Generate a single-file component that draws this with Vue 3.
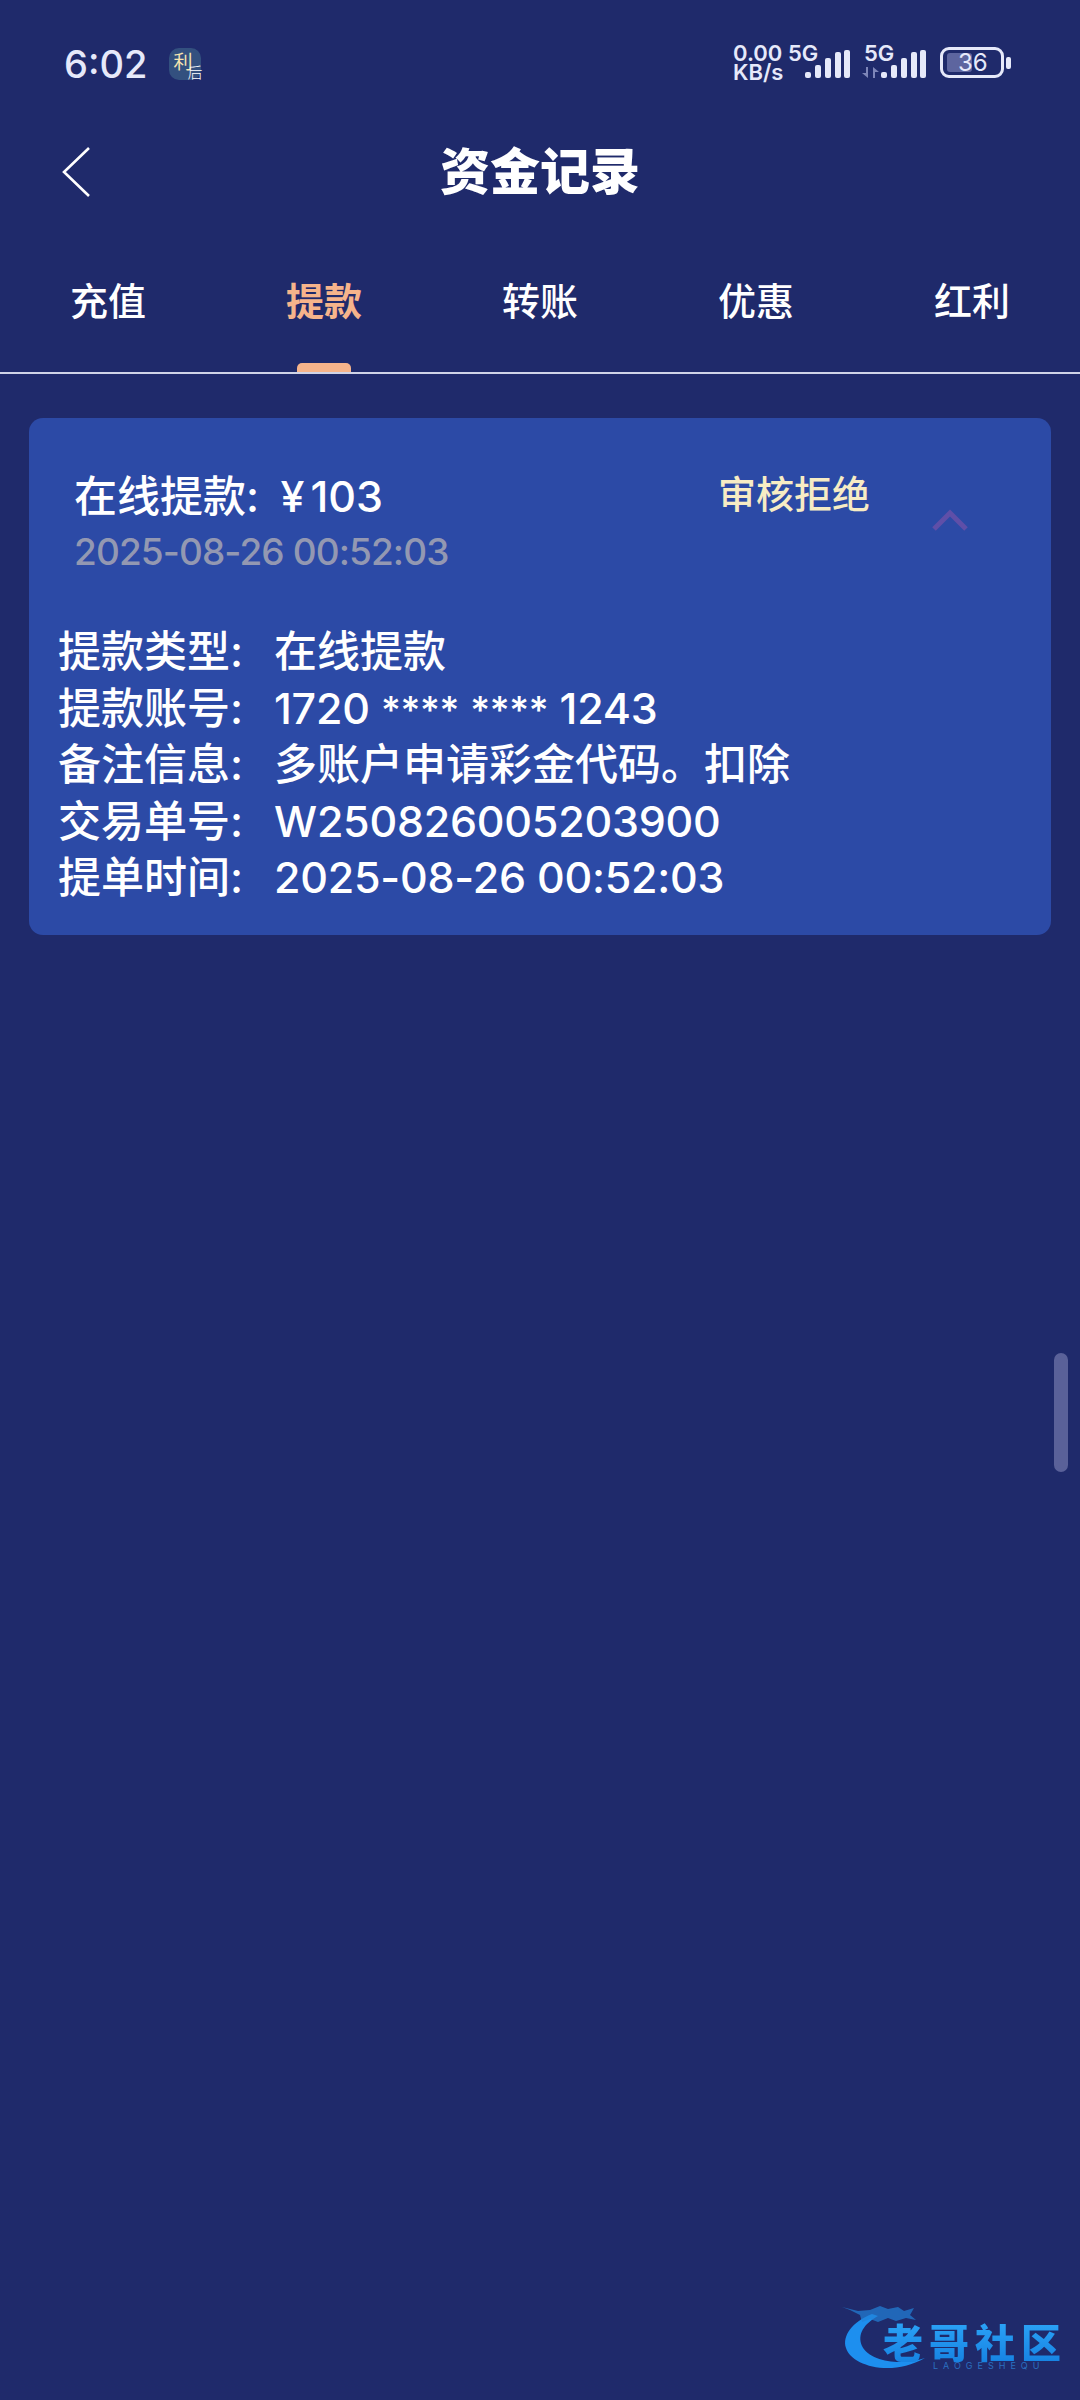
<template>
  <div class="page">
    <div class="status-bar">
      <div class="status-left">
        <span class="time">6:02</span>
        <span class="notify-icon"><i class="notify-a">利</i><i class="notify-b">后</i></span>
      </div>
      <div class="status-right">
        <div class="net-speed"><span>0.00</span><span>KB/s</span></div>
        <div class="signal">
          <span class="five-g">5G</span>
          <svg width="62" height="28" viewBox="0 0 62 28">
            <rect v-for="bar in bars" :key="bar.x" :x="bar.x" :y="bar.y" width="6" :height="28 - bar.y" rx="2" fill="#e6e9fa" />
          </svg>
        </div>
        <div class="signal second">
          <span class="five-g">5G</span>
          <svg class="arrows" width="18" height="11" viewBox="0 0 18 11">
            <path d="M6 0v11L0 6h4V0zM11 11V0l6 5h-4v6z" fill="#7d85b8" />
          </svg>
          <svg width="62" height="28" viewBox="0 0 62 28">
            <rect v-for="bar in bars" :key="bar.x" :x="bar.x" :y="bar.y" width="6" :height="28 - bar.y" rx="2" fill="#e6e9fa" />
          </svg>
        </div>
        <div class="battery">
          <div class="battery-body">
            <span class="battery-fill"></span>
            <span class="battery-num">36</span>
          </div>
          <span class="battery-tip"></span>
        </div>
      </div>
    </div>

    <div class="nav-bar">
      <svg class="back" width="28" height="50" viewBox="0 0 28 50">
        <path d="M27 1 2 25l25 24" fill="none" stroke="#fff" stroke-width="2.6" />
      </svg>
      <h1 class="title">资金记录</h1>
    </div>

    <div class="tabs">
      <div v-for="(tab, index) in tabs" :key="tab" class="tab" :class="{ active: index === 1 }">{{ tab }}</div>
    </div>

    <div class="card">
      <div class="card-head">
        <div class="head-main">
          <div class="amount">在线提款: <span class="yen">¥</span><span>103</span></div>
          <div class="date">2025-08-26 00:52:03</div>
        </div>
        <div class="state">审核拒绝</div>
        <svg class="chevron" width="36" height="22" viewBox="0 0 36 22">
          <path d="M2 20 18 4l16 16" fill="none" stroke="#5f4fa8" stroke-width="5" />
        </svg>
      </div>
      <div class="details">
        <div v-for="row in rows" :key="row.label" class="row">
          <span class="row-label">{{ row.label }}:</span>
          <span :class="{ tight: /^[\w]/.test(row.value) }">
            <span
              v-for="(part, i) in row.value.split(/(\*+)/)"
              :key="i"
              :class="{ stars: part.startsWith('*') }"
            >{{ part }}</span>
          </span>
        </div>
      </div>
    </div>

    <div class="scroll-thumb"></div>

    <div class="logo">
      <svg class="logo-mark" width="122" height="80" viewBox="0 0 122 80">
        <path d="M32 10C12 18 2 32 6 44c5 17 44 30 79 10C62 62 30 58 22 42 17 30 24 20 38 12z" fill="#1d8fef" />
        <path d="M2 3l16 4 12-1 10-4 8 3 10-2 6 4 10-3-4 7 6 5-10-2-10 3-8-3-10 4-8-3-8 3-2-7-10-5z" fill="#2282d8" opacity="0.7" />
      </svg>
      <div class="logo-name">老哥社区</div>
      <div class="logo-sub">LAOGESHEQU</div>
    </div>
  </div>
</template>

<script setup>
const tabs = ['充值', '提款', '转账', '优惠', '红利']

const bars = [
  { x: 17, y: 22 },
  { x: 27, y: 15 },
  { x: 37, y: 8 },
  { x: 47, y: 2 },
  { x: 56, y: 0 }
]

const rows = [
  { label: '提款类型', value: '在线提款' },
  { label: '提款账号', value: '1720 **** **** 1243' },
  { label: '备注信息', value: '多账户申请彩金代码。扣除' },
  { label: '交易单号', value: 'W250826005203900' },
  { label: '提单时间', value: '2025-08-26 00:52:03' }
]
</script>

<style>
body {
  background: #1f2a6b;
}
</style>

<style scoped>
.page {
  position: relative;
  height: 2400px;
  overflow: hidden;
  background: #1f2a6b;
  color: #fff;
  font-family: Inter, "Noto Sans CJK SC", sans-serif;
}

.status-bar {
  display: flex;
  justify-content: space-between;
  align-items: flex-start;
  height: 128px;
  padding: 44px 69px 0 64px;
  box-sizing: border-box;
}

.status-left {
  display: flex;
  align-items: center;
  gap: 22px;
}

.time {
  font-size: 38px;
  line-height: 40px;
  font-weight: 500;
  color: #e6e9fa;
}

.notify-icon {
  position: relative;
  width: 32px;
  height: 32px;
  border-radius: 10px;
  background: #33507f;
}

.notify-icon i {
  position: absolute;
  font-style: normal;
  line-height: 1;
}

.notify-a {
  left: 4px;
  top: 5px;
  font-size: 19px;
  color: #f7e5b0;
}

.notify-b {
  left: 18px;
  top: 17px;
  font-size: 15px;
  font-weight: 300;
  color: #fff;
}

.status-right {
  display: flex;
  align-items: flex-start;
  padding-top: 0;
}

.net-speed {
  display: flex;
  flex-direction: column;
  width: 55px;
  font-size: 22px;
  line-height: 19px;
  font-weight: 600;
  color: #e6e9fa;
}

.signal {
  position: relative;
  width: 62px;
  height: 34px;
  padding-top: 6px;
  margin-right: 14px;
}

.five-g {
  position: absolute;
  left: 0;
  top: 0;
  font-size: 22px;
  line-height: 19px;
  font-weight: 600;
  color: #e6e9fa;
}

.arrows {
  position: absolute;
  left: -2px;
  top: 23px;
}

.battery {
  display: flex;
  align-items: center;
  gap: 2px;
  margin-top: 3px;
}

.battery-body {
  position: relative;
  width: 64px;
  height: 31px;
  box-sizing: border-box;
  border: 3px solid #e6e9fa;
  border-radius: 9px;
}

.battery-fill {
  position: absolute;
  left: 4px;
  top: 3px;
  bottom: 3px;
  width: 25px;
  border-radius: 3px;
  background: #5d659f;
}

.battery-num {
  position: absolute;
  left: 15px;
  top: 0;
  font-size: 24px;
  line-height: 25px;
  color: #e6e9fa;
}

.battery-tip {
  width: 5px;
  height: 12px;
  border-radius: 2px;
  background: #e6e9fa;
}

.nav-bar {
  display: flex;
  justify-content: center;
  align-items: center;
  position: relative;
  height: 88px;
}

.back {
  position: absolute;
  left: 62px;
  top: 19px;
}

.title {
  margin: 0;
  font-size: 50px;
  font-weight: 900;
  line-height: 88px;
  color: #fff;
}

.tabs {
  display: grid;
  grid-template-columns: repeat(5, 216px);
  height: 158px;
  box-sizing: border-box;
  border-bottom: 2px solid #cfd3e8;
}

.tab {
  position: relative;
  padding-top: 60px;
  text-align: center;
  font-size: 38px;
  font-weight: 500;
  line-height: 50px;
  color: #fff;
}

.tab.active {
  font-weight: 700;
  color: #f6b48b;
}

.tab.active::after {
  content: "";
  position: absolute;
  left: 81px;
  bottom: 0;
  width: 54px;
  height: 9px;
  border-radius: 5px 5px 0 0;
  background: #f6b48b;
}

.card {
  margin: 44px 29px 0;
  padding: 48px 0 29px;
  border-radius: 14px;
  background: #2c4aa6;
}

.card-head {
  display: flex;
  align-items: flex-start;
  padding-left: 45px;
}

.head-main {
  width: 644px;
}

.amount {
  font-size: 43px;
  line-height: 60px;
  font-weight: 500;
}

.yen {
  margin: 0 6px 0 10px;
}

.date {
  font-size: 37px;
  line-height: 52px;
  font-weight: 500;
  letter-spacing: -0.9px;
  color: #9398b2;
}

.state {
  width: 214px;
  margin-top: -2px;
  font-size: 38px;
  line-height: 60px;
  font-weight: 500;
  color: #f7ecc4;
}

.chevron {
  margin-top: 43px;
}

.details {
  margin-top: 45px;
  padding-left: 29px;
}

.row {
  display: flex;
  height: 56.5px;
  font-size: 43px;
  line-height: 56.5px;
  font-weight: 500;
}

.row-label {
  width: 216px;
  flex: none;
}

.tight {
  letter-spacing: -0.25px;
}

.stars {
  font-size: 38px;
}

.scroll-thumb {
  position: absolute;
  left: 1054px;
  top: 1353px;
  width: 14px;
  height: 119px;
  border-radius: 7px;
  background: #5a6199;
}

.logo {
  position: absolute;
  left: 840px;
  top: 2300px;
  width: 230px;
  height: 80px;
}

.logo-mark {
  position: absolute;
  left: 0;
  top: 4px;
}

.logo-name {
  position: absolute;
  left: 43px;
  top: 22px;
  font-size: 40px;
  line-height: 44px;
  font-weight: 900;
  letter-spacing: 6px;
  white-space: nowrap;
  background: linear-gradient(#2ba3f7, #1580e0);
  -webkit-background-clip: text;
  background-clip: text;
  color: transparent;
}

.logo-sub {
  position: absolute;
  left: 93px;
  top: 61px;
  font-size: 9px;
  line-height: 10px;
  letter-spacing: 5px;
  color: #2b6fc0;
}
</style>
